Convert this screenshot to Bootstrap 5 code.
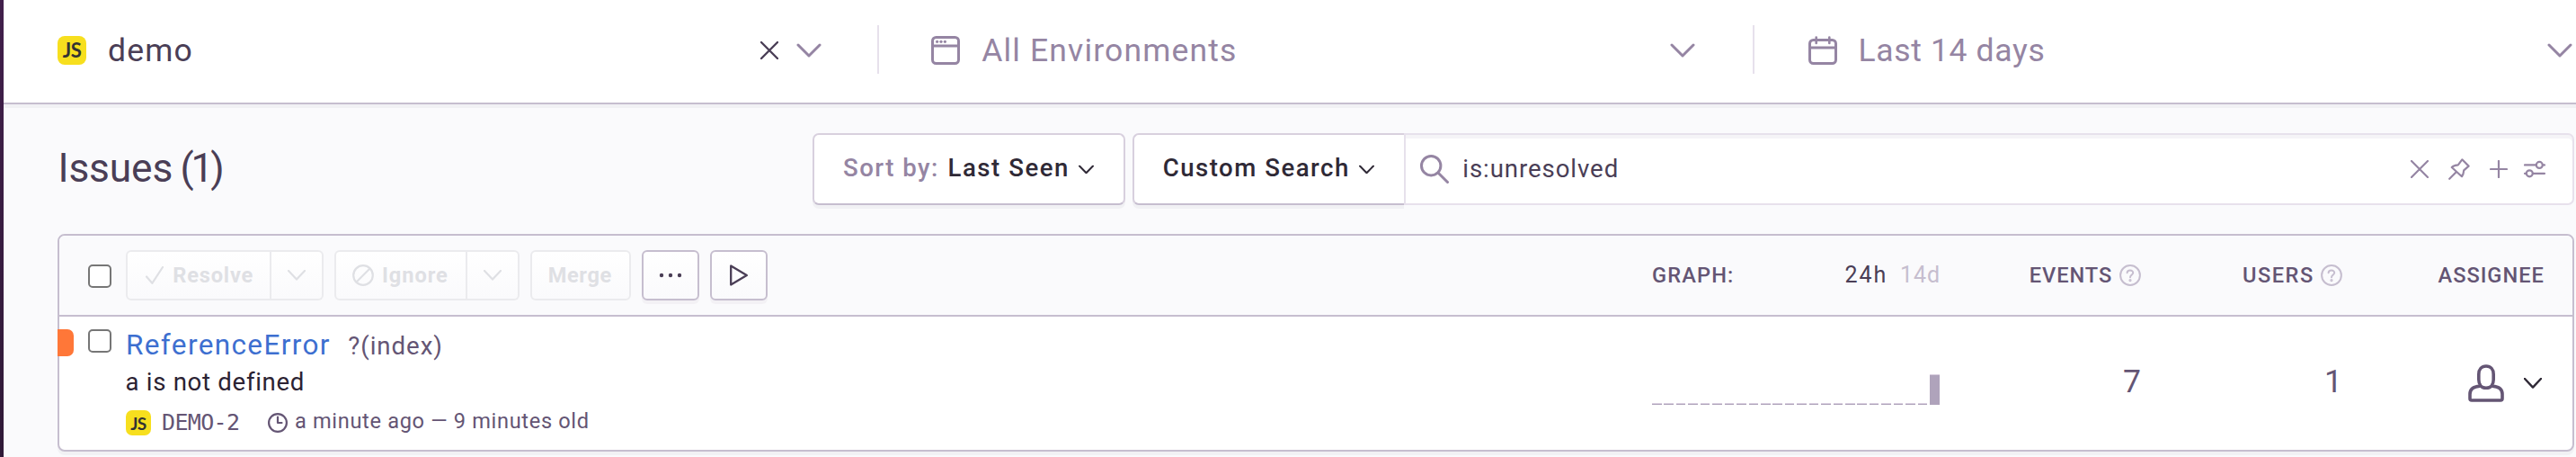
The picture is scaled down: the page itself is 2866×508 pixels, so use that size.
<!DOCTYPE html>
<html lang="en">
<head>
<meta charset="utf-8">
<meta name="viewport" content="width=device-width, initial-scale=1">
<title>Issues</title>
<link href="https://cdn.jsdelivr.net/npm/bootstrap@5.3.0/dist/css/bootstrap.min.css" rel="stylesheet">
<style>
:root{--ink:#4a3e56;--sub:#645574;--muted:#9585a3;--dark:#2f2936;--line:#c6becf;--soft:#e7e1ec;--mid:#d8d0de}
body{font-family:Roboto,"Liberation Sans",sans-serif;color:var(--ink);background:#fafafc;line-height:1.2;height:508px;overflow:hidden}
svg{display:block;flex:none;fill:none;stroke:currentColor;stroke-linecap:round;stroke-linejoin:round}
.txt{white-space:pre;flex:none}
.rail{width:4px;background:linear-gradient(#411f4b,#2f1937)}
.muted{color:var(--muted)}
/* global filter bar */
.filterbar{height:116px;background:#fff;border-bottom:2px solid var(--line);box-shadow:0 4px 0 #f1f1f4;padding-bottom:2px}
.filterbar .txt{font-size:35.5px}
.f-project{width:972px;padding:0 62px 0 60px}
.f-env{width:972px;padding:0 64px 0 58px}
.f-date{padding:0 4px 0 60px}
.rule{width:2px;height:54px;background:var(--soft);margin-top:0;transform:translateY(-1px)}
.js-logo{background:#f7df1e;color:#333;font:700 22px/1 Lato,sans-serif;letter-spacing:-.5px}
.js-lg{width:32px;height:32px;border-radius:8px}
.js-sm{width:28px;height:28px;border-radius:7px;font-size:19px}
/* heading and search */
.headrow{height:80px;margin:32px 2px 0 60px}
.headrow h1{font-size:44.3px;font-weight:400;width:840px;line-height:52px;padding:0 0 2px .5px;letter-spacing:-.15px}
.headrow h1 span{letter-spacing:-3.2px;margin-left:-2.5px}
.box{height:80px;background:#fff;border:2px solid var(--mid);border-bottom-color:var(--line);border-radius:7px;box-shadow:0 4px 0 #f1f1f4;font-size:27.6px;font-weight:500;color:var(--dark);padding:0 0 3px}
.box svg{transform:translateY(1.5px)}
.sortbox{width:348px;margin-right:8px;padding-left:32px}
.custombox{width:302px;border-right:0;border-radius:7px 0 0 7px;padding-left:31.7px}
.search{height:80px;background:#fff;border:2px solid var(--soft);border-radius:0 7px 7px 0;box-shadow:inset 0 4px 0 #f5f4f7;padding:0 30px 0 16px;font-size:27.6px}
/* issue panel */
.issues{margin:32px 2px 0 60px;height:242px;border:2px solid var(--line);border-radius:8px;background:#fff;box-shadow:0 4px 0 #f1f1f4}
.p-head{height:90px;border-bottom:2px solid var(--line);background:#fafafc;border-radius:6px 6px 0 0;padding:0 32px}
.p-row{height:148px;padding-right:32px}
.check{width:26px;height:26px;margin:0;background:#fff;border:2px solid #767676!important;border-radius:5px!important;flex:none}
.tool{height:56px;border:2px solid var(--line);border-radius:6px;background:linear-gradient(#fff,#fafafc);padding:0;font-size:23.6px;font-weight:700;box-shadow:0 4px 0 #f3f1f5;color:var(--ink);line-height:1.2}
.tool.off{border-color:#ebebee;color:#dfe0e4;box-shadow:none}
.w-graph{width:320px}
.w-num{width:224px}
.colhead{font-size:23.6px;font-weight:500;color:var(--sub)}
.level{width:18px;height:30px;margin:14px 0 0 -2px;background:#ff7738;border-radius:0 7px 7px 0;flex:none}
.title{font-size:31.5px;letter-spacing:1.37px;color:#3d6fd0;text-decoration:none}
.body-col{padding-top:9px}
.line1{height:44px;padding-top:3.5px}
.line2{height:39px;font-size:27.6px;letter-spacing:.7px;color:#2b2233;line-height:39px;margin-left:-.5px}
.line3{height:28px;margin-top:12px;font-size:23.6px}
.mono{font-family:"DejaVu Sans Mono",monospace;font-size:25px;font-weight:400;letter-spacing:-.65px}
.count{font-size:35.5px;color:var(--sub)}
.spark{height:34px;margin-top:-2px}
.spark i{width:10.6px;background:#afa3bb;border-top:1px solid #d9cfe0}
</style>
</head>
<body class="d-flex">
<div class="rail flex-shrink-0"></div>
<main class="flex-grow-1">

<header class="filterbar d-flex align-items-center">
  <div class="f-project d-flex align-items-center">
    <span class="js-logo js-lg d-flex align-items-center justify-content-center">JS</span>
    <span class="txt" style="letter-spacing:1.17px;margin-left:24px">demo</span>
    <svg class="ms-auto" width="20" height="20" viewBox="0 0 20 20" stroke-width="2.4"><path d="M1 1 19 19M19 1 1 19"/></svg>
    <svg class="muted" style="margin-left:20px" width="28" height="16" viewBox="0 0 28 16" stroke-width="3"><path d="M2 2 14 14 26 2"/></svg>
  </div>
  <div class="rule"></div>
  <div class="f-env d-flex align-items-center muted">
    <svg width="32" height="32" viewBox="0 0 32 32" stroke-width="3"><rect x="1.5" y="1.5" width="29" height="29" rx="4"/><path d="M2 11H30" stroke-linecap="butt"/><g fill="currentColor" stroke="none"><circle cx="6.6" cy="6.3" r="1.6"/><circle cx="11" cy="6.3" r="1.6"/><circle cx="15.4" cy="6.3" r="1.6"/></g></svg>
    <span class="txt" style="letter-spacing:1.15px;margin-left:24.2px">All Environments</span>
    <svg class="ms-auto" width="28" height="16" viewBox="0 0 28 16" stroke-width="3"><path d="M2 2 14 14 26 2"/></svg>
  </div>
  <div class="rule"></div>
  <div class="f-date d-flex align-items-center flex-grow-1 muted">
    <svg width="32" height="32" viewBox="0 0 32 32" stroke-width="3"><rect x="1.5" y="4.5" width="29" height="26" rx="4"/><path d="M2 13H30" stroke-linecap="butt"/><path d="M8.7 1.5V8M23.3 1.5V8" stroke-width="2.6"/></svg>
    <span class="txt" style="letter-spacing:.65px;margin-left:23.5px">Last 14 days</span>
    <svg class="ms-auto" width="28" height="16" viewBox="0 0 28 16" stroke-width="3"><path d="M2 2 14 14 26 2"/></svg>
  </div>
</header>

<section class="headrow d-flex align-items-center">
  <h1 class="txt m-0">Issues <span>(1)</span></h1>
  <div class="box sortbox d-flex align-items-center">
    <span class="txt muted" style="letter-spacing:1.47px;width:116.5px">Sort by:</span>
    <span class="txt" style="letter-spacing:1.53px;width:145.5px">Last Seen</span>
    <svg width="17" height="10" viewBox="0 0 17 10" stroke-width="2"><path d="M1 1 8.5 8.8 16 1"/></svg>
  </div>
  <div class="box custombox d-flex align-items-center">
    <span class="txt" style="letter-spacing:1.5px;width:218px">Custom Search</span>
    <svg width="17" height="10" viewBox="0 0 17 10" stroke-width="2"><path d="M1 1 8.5 8.8 16 1"/></svg>
  </div>
  <div class="search d-flex align-items-center flex-grow-1">
    <svg class="muted" width="32" height="32" viewBox="0 0 32 32" stroke-width="3"><circle cx="12.2" cy="12.2" r="10.7"/><path d="M20 20 30.5 30.5"/></svg>
    <span class="txt" style="letter-spacing:.92px;margin-left:15.3px">is:unresolved</span>
    <div class="ms-auto d-flex align-items-center muted">
      <svg width="20" height="20" viewBox="0 0 20 20" stroke-width="2.2"><path d="M1 1 19 19M19 1 1 19"/></svg>
      <svg style="margin-left:22px" width="24" height="24" viewBox="0 0 24 24" stroke-width="2.2"><path d="M1.2 22.8 8.7 15.3M15.3 1.3 22.6 8.6 17.2 13.4C17 16 16.6 18.2 15 20.2L3.8 10C5.5 8.2 8 7.6 10.8 7.4Z"/></svg>
      <svg style="margin-left:22px" width="20" height="20" viewBox="0 0 20 20" stroke-width="2.2"><path d="M10 1V19M1 10H19"/></svg>
      <svg style="margin-left:18px" width="24" height="20" viewBox="0 0 24 20" stroke-width="2.2"><path d="M1 5.4H13.6M21 5.4H23M1 14.8H2.5M10 14.8H23"/><circle cx="17.3" cy="5.4" r="3.5"/><circle cx="6.3" cy="14.8" r="3.5"/></svg>
    </div>
  </div>
</section>

<section class="issues">
  <div class="p-head d-flex align-items-center">
    <input type="checkbox" class="form-check-input check" style="margin-top:2px" aria-label="Select all">
    <div class="d-flex" style="margin-left:16px;gap:12px">
      <div class="d-flex">
        <button class="btn tool off d-flex align-items-center rounded-end-0" style="width:162px;padding-left:20px">
          <svg width="20" height="20" viewBox="0 0 20 20" stroke-width="2.2"><path d="M1 11.5 7.3 18.8 19 1"/></svg>
          <span class="txt" style="letter-spacing:.81px;margin-left:10.3px">Resolve</span></button>
        <button class="btn tool off d-flex align-items-center justify-content-center rounded-start-0 border-start-0" style="width:58px" aria-label="Resolve options">
          <svg width="20" height="12" viewBox="0 0 20 12" stroke-width="2.2"><path d="M1 1 10 10.6 19 1"/></svg></button>
      </div>
      <div class="d-flex">
        <button class="btn tool off d-flex align-items-center rounded-end-0" style="width:148px;padding-left:18px">
          <svg width="24" height="24" viewBox="0 0 24 24" stroke-width="2.2"><circle cx="12" cy="12" r="10.8"/><path d="M4.5 19.5 19.5 4.5"/></svg>
          <span class="txt" style="letter-spacing:.93px;margin-left:9px">Ignore</span></button>
        <button class="btn tool off d-flex align-items-center justify-content-center rounded-start-0 border-start-0" style="width:58px" aria-label="Ignore options">
          <svg width="20" height="12" viewBox="0 0 20 12" stroke-width="2.2"><path d="M1 1 10 10.6 19 1"/></svg></button>
      </div>
      <button class="btn tool off d-flex align-items-center" style="width:112px;padding-left:17.7px"><span class="txt" style="letter-spacing:.63px">Merge</span></button>
      <button class="btn tool d-flex align-items-center justify-content-center" style="width:64px" aria-label="More"><svg width="26" height="6" viewBox="0 0 26 6"><g fill="currentColor" stroke="none"><circle cx="3" cy="3" r="2.2"/><circle cx="13" cy="3" r="2.2"/><circle cx="23" cy="3" r="2.2"/></g></svg></button>
      <button class="btn tool d-flex align-items-center justify-content-center" style="width:64px" aria-label="Live updates"><svg width="20" height="24" viewBox="0 0 20 24" stroke-width="2.3"><path d="M1.2 1.5V22.5L18.8 12Z"/></svg></button>
    </div>
    <div class="w-graph d-flex align-items-center ms-auto colhead">
      <span class="txt" style="letter-spacing:1.13px">GRAPH:</span>
      <span class="txt ms-auto fw-normal" style="font-size:25px;letter-spacing:2px;color:var(--ink);width:61.5px">24h</span>
      <span class="txt fw-normal" style="font-size:25px;letter-spacing:.95px;color:var(--line);width:44px">14d</span>
    </div>
    <div class="w-num d-flex align-items-center justify-content-end colhead">
      <span class="txt" style="letter-spacing:.96px;width:100.3px">EVENTS</span>
      <svg width="24" height="24" viewBox="0 0 24 24" stroke-width="2" style="color:var(--line)"><circle cx="12" cy="12" r="10.9"/><path d="M8.6 9.2C8.8 5.6 15.3 5.7 15.2 9.3 15.1 11.6 12 11.5 12 14.3"/><circle cx="12" cy="17.6" r=".6"/></svg>
    </div>
    <div class="w-num d-flex align-items-center justify-content-end colhead">
      <span class="txt" style="letter-spacing:1.52px;width:87px">USERS</span>
      <svg width="24" height="24" viewBox="0 0 24 24" stroke-width="2" style="color:var(--line)"><circle cx="12" cy="12" r="10.9"/><path d="M8.6 9.2C8.8 5.6 15.3 5.7 15.2 9.3 15.1 11.6 12 11.5 12 14.3"/><circle cx="12" cy="17.6" r=".6"/></svg>
    </div>
    <div class="w-num d-flex align-items-center justify-content-end colhead"><span class="txt" style="letter-spacing:.99px;width:117.5px">ASSIGNEE</span></div>
  </div>

  <div class="p-row d-flex">
    <div class="level"></div>
    <input type="checkbox" class="form-check-input check" style="margin:14px 16px 0" aria-label="Select issue">
    <div class="body-col">
      <div class="line1 d-flex align-items-baseline">
        <a href="#" class="title txt" style="width:247.3px">ReferenceError</a>
        <span class="txt" style="font-size:27.6px;letter-spacing:.95px;color:var(--sub)">?(index)</span>
      </div>
      <div class="line2 txt">a is not defined</div>
      <div class="line3 d-flex align-items-center" style="color:var(--sub)">
        <span class="js-logo js-sm d-flex align-items-center justify-content-center">JS</span>
        <span class="txt mono" style="margin-left:12px;width:118px">DEMO-2</span>
        <svg width="22" height="22" viewBox="0 0 22 22" stroke-width="2.2"><circle cx="11" cy="11" r="9.9"/><path d="M11 4.5V11H15.5"/></svg>
        <span class="txt" style="letter-spacing:.66px;margin:-4px 0 0 8px">a minute ago — 9 minutes old</span>
      </div>
    </div>
    <div class="w-graph ms-auto d-flex align-items-end align-self-center">
      <div class="spark d-flex align-items-end justify-content-between w-100" id="spark" style="transform:translateY(8px)"></div>
    </div>
    <div class="w-num count text-end align-self-center txt" style="margin-top:-4px">7</div>
    <div class="w-num count text-end align-self-center txt" style="margin-top:-4px">1</div>
    <div class="w-num d-flex align-items-center justify-content-end">
      <svg width="40" height="42" viewBox="0 0 40 42" stroke-width="3.6" style="color:var(--sub)"><path d="M11.8 11C11.8 5.5 15 2 20 2S28.2 5.5 28.2 11V17C28.2 22.5 25 26.3 20 26.3S11.8 22.5 11.8 17Z"/><path d="M13 24.2C6 24.6 2 27 2 33V38C2 39.3 2.7 40 4 40H36C37.3 40 38 39.3 38 38V33C38 27 34 24.6 27 24.2"/></svg>
      <svg style="margin:0 2px 0 22px;color:var(--dark)" width="20" height="12" viewBox="0 0 20 12" stroke-width="2.4"><path d="M1 1 10 10.6 19 1"/></svg>
    </div>
  </div>
</section>
</main>
<script src="https://cdn.jsdelivr.net/npm/bootstrap@5.3.0/dist/js/bootstrap.bundle.min.js"></script>
<script>
// hourly event counts over the last 24 hours
const hours = Array(23).fill(0).concat(7);
document.getElementById('spark').innerHTML =
  hours.map(n => `<i style="height:${2 + n / 7 * 32}px"></i>`).join('');
</script>
</body>
</html>
